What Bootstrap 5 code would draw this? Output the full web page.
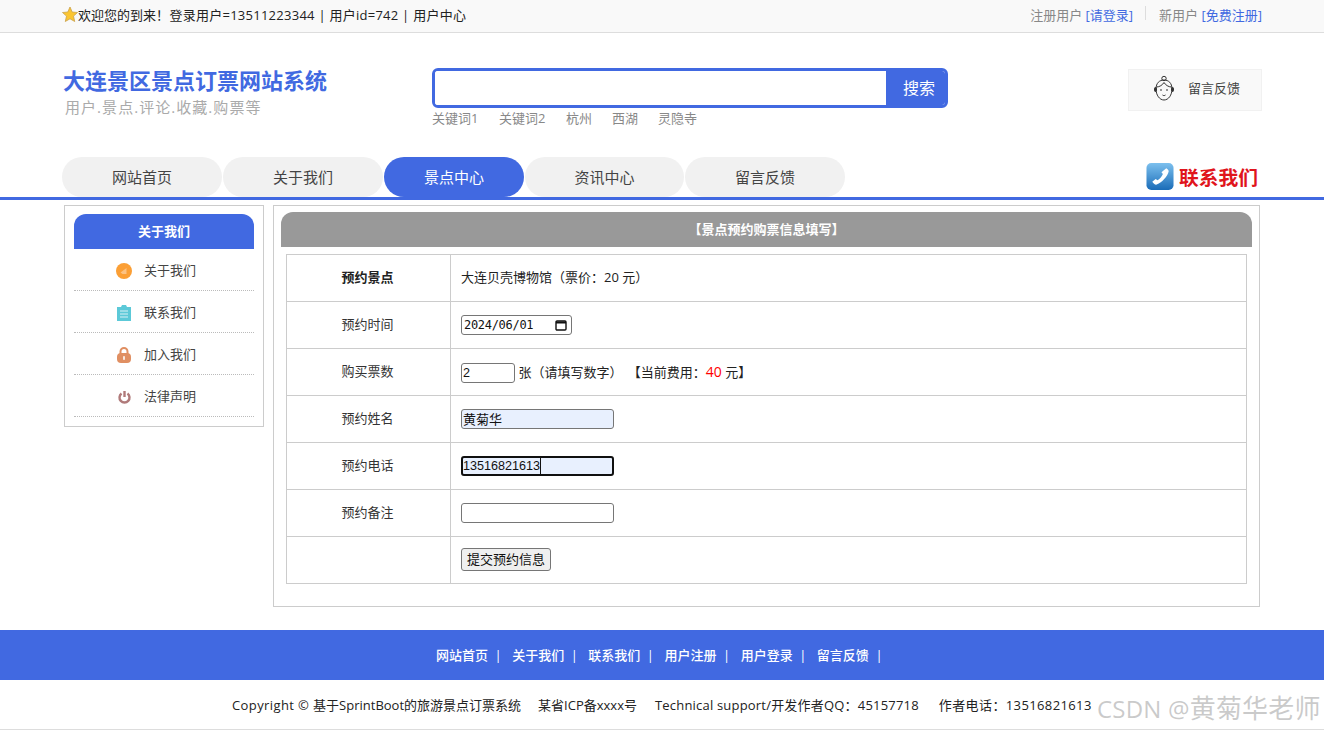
<!DOCTYPE html>
<html lang="zh-CN">
<head>
<meta charset="utf-8">
<title>大连景区景点订票网站系统</title>
<link href="https://cdn.jsdelivr.net/npm/bootstrap@5.3.0/dist/css/bootstrap.min.css" rel="stylesheet">
<style>
:root{--royal:#4169e1}
html,body{height:730px;overflow:hidden}
body{font-family:"Open Sans","Noto Sans CJK SC",sans-serif;font-size:13px;color:#333;background:#fff;position:relative}
a{text-decoration:none;color:inherit}
.wrap{width:1200px;margin-left:62px}
.topbar{height:33px;background:#f9f9f9;border-bottom:1px solid #ddd;line-height:30px}
.topbar .lft{color:#222;font-size:13px}
.topbar .lft svg{margin-top:-4px}
.hi{margin-right:-3px}
.usr{letter-spacing:.26px;font-weight:400}
.topbar .rgt{color:#888}
.topbar .rgt a{color:var(--royal)}
.topbar .vsep{width:1px;height:14px;background:#ddd;margin:6px 13px 0 12px;align-self:flex-start}
.headrow{height:124px}
.brand{width:370px;padding-top:33px}
.brand-t{font-size:22px;line-height:28px;font-weight:700;color:var(--royal);padding-left:1px}
.brand-s{font-size:15px;line-height:20px;color:#aaa;padding-left:3px;margin-top:3px;letter-spacing:1.05px}
.searchzone{width:516px;padding-top:35px}
.searchbox{height:40px;border:3px solid var(--royal);border-radius:6px;overflow:hidden}
.searchbox input{flex:1;border:0;outline:0;min-width:0}
.searchbox button{width:59px;border:0;background:var(--royal);color:#fff;font-size:16px;padding:0 0 0 7px;font-family:inherit}
.kw{gap:20px;color:#888;font-size:13px;line-height:20px;margin-top:0}
.kw span:nth-child(-n+2){margin-right:.5px}
.fbbox{width:134px;height:42px;margin-top:36px;background:#f9f9f9;border:1px solid #f1f1f1;color:#444;font-size:13px;padding:0 0 2px 22px;gap:11px}
.navline{height:43px;border-bottom:3px solid var(--royal)}
.navitems{gap:1px}
.navpill{display:block;width:160px;height:40px;line-height:40px;text-align:center;background:#f1f1f1;border-radius:20px;font-size:15px;color:#444}
.navpill.on{width:140px;background:var(--royal);color:#fff}
.navpill.slim{width:159px}
.contact{color:#e0141c;font-size:19.75px;font-weight:700;line-height:30px;padding-right:4px;gap:5px;padding-top:5px}
.contact span{padding-top:1px}
.mainrow{gap:9px;padding-top:5px;padding-left:2px}
.sidebox{width:200px;height:222px;border:1px solid #ccc;padding:8px 9px 0}
.sidehead{height:35px;line-height:35px;background:var(--royal);color:#fff;font-weight:700;text-align:center;border-radius:12px 12px 0 0;font-size:13px}
.sideitem{height:42px;border-bottom:1px dotted #bbb;padding:2px 0 0 41px;gap:11px;color:#444;font-size:13px}
.sideitem .ic{width:18px;flex:none;display:flex;justify-content:center}
.formbox{width:987px;height:402px;border:1px solid #ccc;padding:6px 7px 0}
.formhead{height:35px;line-height:35px;background:#999;color:#fff;font-weight:700;text-align:center;border-radius:12px 12px 0 0;font-size:13px}
.formtbl{width:961px;margin:7px 0 0 5px;border-collapse:collapse;table-layout:fixed;color:#222}
.formtbl td{height:47px;border:1px solid #ccc;padding:0 0 0 10px;vertical-align:middle;font-size:13px}
.formtbl td:first-child{width:164px;text-align:center;padding:0 2px 0 0;color:#333}
.formtbl td.strong{font-weight:700;color:#222}
.fld{display:inline-block;box-sizing:border-box;height:20px;border:1px solid #767676;border-radius:3px;background:#fff;font-size:13px;line-height:18px;padding:0 1px;color:#111;vertical-align:middle;font-family:inherit}
.num{font-family:"Liberation Sans",sans-serif;font-size:12.6px}
.w153{width:153px}
.numf{width:54px}
.filled{background:#e8f0fe;padding-bottom:2px}
.focusf{border:2px solid #101010;line-height:16px;padding:0;position:relative}
.caretbar{position:absolute;left:77px;top:0;width:1px;height:16px;background:#111}
.dateinp{width:111px;font-family:"DejaVu Sans Mono","Liberation Mono",monospace;font-size:12px;padding-left:2px;position:relative;letter-spacing:-.3px}
.calic{position:absolute;right:3px;top:2px}
.subbtn{height:23px;width:90px;border:1px solid #767676;border-radius:3px;background:#efefef;font-size:13px;padding:0;color:#111;font-family:inherit;line-height:20px;margin-top:-2px}
.fee{margin-left:2px}
.red{color:#f00;font-size:14px}
.footblue{margin-top:23px;height:50px;background:var(--royal);color:#fff;font-size:13px;font-weight:500;line-height:50px;gap:6.5px;padding-left:436px}
.footcopy{height:50px;border-bottom:1px solid #ddd;line-height:50px;color:#222;font-size:13px;padding-left:232px;white-space:pre}
.c1{letter-spacing:.4px}
.c2{margin-left:17px}
.c3{margin-left:18px;letter-spacing:.2px}
.c4{margin-left:20px;letter-spacing:.38px}
.wm{position:absolute;left:1097px;top:691px;font-size:24px;line-height:34px;color:rgba(150,150,150,.5);white-space:nowrap;letter-spacing:.2px}
.wm span{font-size:26px}
</style>
</head>
<body>
<div class="topbar">
  <div class="wrap d-flex justify-content-between">
    <div class="lft"><svg width="16" height="17" viewBox="0 0 16 17"><path d="M8 1l2.200 5 5.300.5-4 3.600 1.200 5.400L8 12.800l-4.700 2.700 1.200-5.400-4-3.600 5.300-.5z" fill="#fbc531" stroke="#c9a14a" stroke-width=".8"/></svg><span class="hi">欢迎您的到来！</span> <span class="usr">登录用户=13511223344 | 用户id=742 | 用户中心</span></div>
    <div class="rgt d-flex"><span>注册用户 <a href="#">[请登录]</a></span><i class="vsep"></i><span>新用户 <a href="#">[免费注册]</a></span></div>
  </div>
</div>
<div class="wrap headrow d-flex">
  <div class="brand">
    <div class="brand-t">大连景区景点订票网站系统</div>
    <div class="brand-s">用户.景点.评论.收藏.购票等</div>
  </div>
  <div class="searchzone">
    <div class="searchbox d-flex"><input type="text" aria-label="搜索"><button type="button">搜索</button></div>
    <div class="kw d-flex"><span>关键词1</span><span>关键词2</span><span>杭州</span><span>西湖</span><span>灵隐寺</span></div>
  </div>
  <div class="fbbox d-flex align-items-center ms-auto">
    <svg width="26" height="28" viewBox="0 0 26 28" fill="none" stroke="#333" stroke-width="1"><circle cx="13" cy="3.500" r="2.200"/><path d="M5 14c0-6 3.500-9 8-9s8 3 8 9c0 6-3.500 11-8 11S5 20 5 14z"/><path d="M5.500 12c3 0 6-2 7.500-4.500 1.500 2.500 4.500 4.500 7.500 4.500"/><path d="M9 15h2M15 15h2M11.500 20c1 .8 2 .8 3 0"/><rect x="3.500" y="12.500" width="2" height="4" rx="1" fill="#333"/><rect x="20.500" y="12.500" width="2" height="4" rx="1" fill="#333"/></svg>
    <span>留言反馈</span>
  </div>
</div>
<div class="navline">
  <div class="wrap d-flex justify-content-between">
    <nav class="navitems d-flex">
      <a class="navpill" href="#">网站首页</a>
      <a class="navpill" href="#">关于我们</a>
      <a class="navpill on" href="#">景点中心</a>
      <a class="navpill slim" href="#">资讯中心</a>
      <a class="navpill" href="#">留言反馈</a>
    </nav>
    <div class="contact d-flex align-items-start">
      <svg width="28" height="29" viewBox="0 0 29 29"><defs><linearGradient id="gph" x1="0" y1="0" x2="0" y2="1"><stop offset="0" stop-color="#7cc0ee"/><stop offset="1" stop-color="#1a6cb8"/></linearGradient></defs><rect x=".5" y=".5" width="28" height="28" rx="5" fill="url(#gph)"/><path d="M21 6c1.500 1 2.500 2 2.500 3-1 5-7 12-13 14-1.500 0-3-1.500-4-3l3.500-3 2 1.500c2.500-1.500 4.500-4 5.500-6.500l-1.500-2z" fill="#fff"/></svg>
      <span>联系我们</span>
    </div>
  </div>
</div>
<div class="wrap mainrow d-flex">
  <aside class="sidebox">
    <div class="sidehead">关于我们</div>
    <div class="sideitem d-flex align-items-center"><span class="ic"><svg width="16" height="16" viewBox="0 0 16 16"><circle cx="8" cy="8" r="8" fill="#fb9f35"/><path d="M4.500 9.500L10.500 5v6h-4z" fill="#fcc283"/></svg></span>关于我们</div>
    <div class="sideitem d-flex align-items-center"><span class="ic"><svg width="14" height="16" viewBox="0 0 14 16"><path d="M0 2h4l1-2h4l1 2h4v16H0z" fill="#5cc9d8"/><path d="M3 6h8M3 9h8M3 12h8" stroke="#d8f2f6" stroke-width="1.200"/></svg></span>联系我们</div>
    <div class="sideitem d-flex align-items-center"><span class="ic"><svg width="14" height="16" viewBox="0 0 14 16"><path d="M3.500 7V4.500a3.500 3.500 0 017 0V7" fill="none" stroke="#e08f62" stroke-width="2"/><rect y="6" width="14" height="10" rx="4" fill="#e08f62"/><rect x="6.200" y="9" width="1.600" height="4" rx=".8" fill="#fff"/></svg></span>加入我们</div>
    <div class="sideitem d-flex align-items-center"><span class="ic"><svg width="13" height="14" viewBox="0 0 13 14" fill="none" stroke="#b07a7a" stroke-width="2.400"><path d="M3.500 3.500a5 5 0 106 0"/><path d="M6.500 1v6"/></svg></span>法律声明</div>
  </aside>
  <section class="formbox">
    <div class="formhead">【景点预约购票信息填写】</div>
    <table class="formtbl">
      <tr><td class="strong">预约景点</td><td>大连贝壳博物馆（票价：20 元）</td></tr>
      <tr><td>预约时间</td><td><span class="fld dateinp">2024/06/01<svg class="calic" width="14" height="14" viewBox="0 0 14 14" fill="none" stroke="#111"><rect x="2" y="3" width="10" height="9" rx="1" stroke-width="1.400"/><path d="M2 4.500h10" stroke-width="2"/></svg></span></td></tr>
      <tr><td>购买票数</td><td><span class="fld numf num">2</span> 张（请填写数字） <span class="fee">【当前费用：<span class="red">40</span> 元】</span></td></tr>
      <tr><td>预约姓名</td><td><input class="fld w153 filled" type="text" value="黄菊华" aria-label="预约姓名"></td></tr>
      <tr><td>预约电话</td><td><span class="fld w153 filled focusf num">13516821613<i class="caretbar"></i></span></td></tr>
      <tr><td>预约备注</td><td><input class="fld w153" type="text" aria-label="预约备注"></td></tr>
      <tr><td></td><td><button class="subbtn" type="button">提交预约信息</button></td></tr>
    </table>
  </section>
</div>
<div class="footblue d-flex">
  <span>网站首页</span><span>|</span><span class="ms-1">关于我们</span><span>|</span><span class="ms-1">联系我们</span><span>|</span><span class="ms-1">用户注册</span><span>|</span><span class="ms-1">用户登录</span><span>|</span><span class="ms-1">留言反馈</span><span>|</span>
</div>
<div class="footcopy"><span class="c1">Copyright © </span><span>基于SprintBoot的旅游景点订票系统</span><span class="c2">某省ICP备xxxx号</span><span class="c3">Technical support/开发作者QQ：45157718</span><span class="c4">作者电话：13516821613</span></div>
<div class="wm">CSDN @<span>黄菊华老师</span></div>
</body>
</html>
